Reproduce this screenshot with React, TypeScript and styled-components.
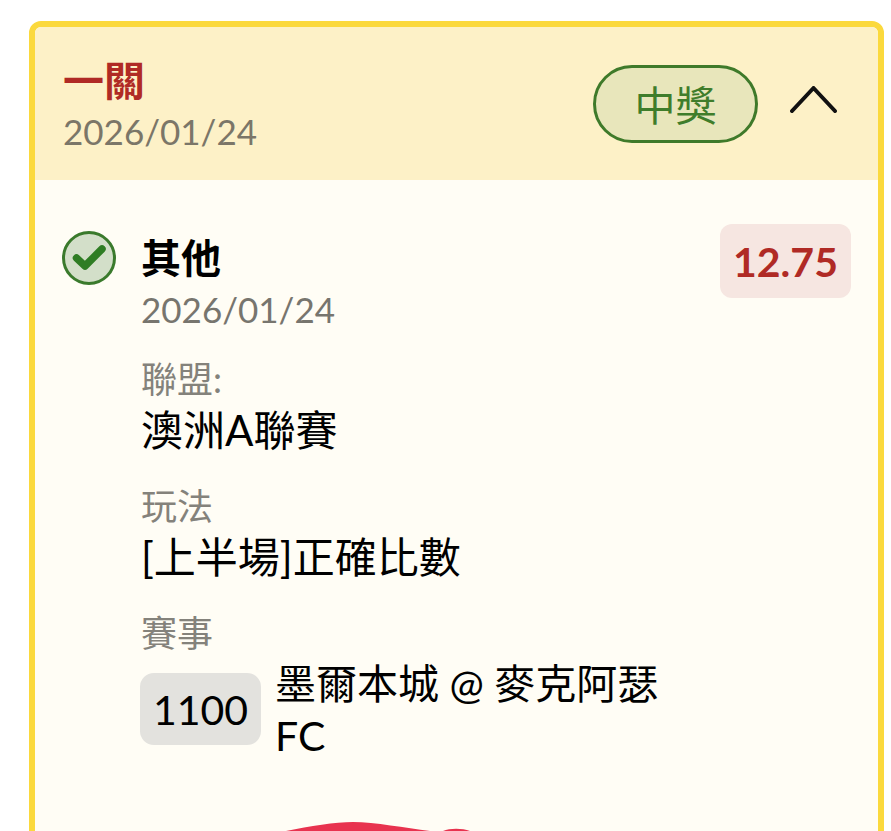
import styled, { createGlobalStyle } from "styled-components";

const GlobalStyle = createGlobalStyle`
	html, body {
		margin: 0;
		padding: 0;
		background: #fff;
		height: 831px;
		overflow: hidden;
	}
	body {
		font-family: Lato, "Noto Sans CJK TC", sans-serif;
	}
`;

const Page = styled.div`
	padding: 21px 7px 0 29px;
	height: 831px;
	box-sizing: border-box;
	overflow: hidden;
`;

const Card = styled.div`
	border: 6px solid #fbd93d;
	border-radius: 12px;
	background: #fffdf5;
	overflow: hidden;
`;

const Header = styled.div`
	display: flex;
	justify-content: space-between;
	align-items: center;
	height: 153px;
	padding: 0 41px 0 28px;
	background: #fdf1c7;
`;

const TitleBlock = styled.div`
	padding-top: 3px;
`;

const HeaderTitle = styled.div`
	font-size: 41px;
	line-height: 52px;
	font-weight: 700;
	color: #b02a25;
`;

const DateText = styled.div`
	font-size: 35px;
	line-height: 48px;
	color: #7b7668;
`;

const HeaderRight = styled.div`
	display: flex;
	align-items: center;
	gap: 32px;
`;

const Chevron = styled.svg`
	display: block;
	width: 47px;
	height: 27px;
	margin-bottom: 8px;
`;

const StatusPill = styled.div`
	display: flex;
	align-items: center;
	justify-content: center;
	width: 165px;
	height: 78px;
	padding-bottom: 2px;
	box-sizing: border-box;
	border: 3px solid #3f7a2a;
	border-radius: 39px;
	background: #e8e6bb;
	color: #3f7d2b;
	font-size: 41px;
`;

const Body = styled.div`
	padding: 44px 27px 0 28px;
`;

const BetRow = styled.div`
	display: flex;
	align-items: flex-start;
`;

const CheckIcon = styled.svg`
	width: 54px;
	height: 54px;
	margin: 7px 25px 0 -1px;
	flex: none;
`;

const BetInfo = styled.div`
	flex: 1;
	padding-top: 7px;
`;

const BetName = styled.div`
	font-size: 40px;
	line-height: 55px;
	font-weight: 700;
	color: #000;
`;

const BetDate = styled.div`
	font-size: 35px;
	line-height: 46px;
	color: #77756e;
`;

const OddsBadge = styled.div`
	flex: none;
	width: 131px;
	height: 74px;
	display: flex;
	align-items: center;
	justify-content: center;
	border-radius: 12px;
	background: #f6e6e1;
	color: #b02a25;
	font-size: 41px;
	font-weight: 700;
`;

const FieldList = styled.div`
	display: flex;
	flex-direction: column;
	gap: 25px;
	margin: 22px 0 0 78px;
`;

const FieldLabel = styled.div`
	font-size: 36px;
	line-height: 50px;
	color: #84827b;
`;

const FieldValue = styled.div`
	font-size: 42px;
	line-height: 52px;
	color: #000;
`;

const MatchRow = styled.div`
	display: flex;
	align-items: flex-start;
	gap: 14px;
	margin-left: -1px;
`;

const MatchCode = styled.div`
	flex: none;
	width: 121px;
	height: 72px;
	margin-top: 15px;
	display: flex;
	align-items: center;
	justify-content: center;
	border-radius: 14px;
	background: #e3e2de;
	color: #000;
	font-size: 41px;
`;

const MatchName = styled.div`
	width: 400px;
	font-size: 41px;
	line-height: 52px;
	color: #000;
`;

const Emblem = styled.svg`
	display: block;
	width: 200px;
	height: 30px;
	margin: 60px 0 0 217px;
`;

export default function App() {
	return (
		<Page>
			<GlobalStyle />
			<Card>
				<Header>
					<TitleBlock>
						<HeaderTitle>一關</HeaderTitle>
						<DateText>2026/01/24</DateText>
					</TitleBlock>
					<HeaderRight>
						<StatusPill>中獎</StatusPill>
						<Chevron viewBox="0 0 47 27" fill="none">
							<path d="M2 25L23.5 2L45 25" stroke="#111" strokeWidth="4" strokeLinecap="round" strokeLinejoin="round" />
						</Chevron>
					</HeaderRight>
				</Header>
				<Body>
					<BetRow>
						<CheckIcon viewBox="0 0 54 54" fill="none">
							<circle cx="27" cy="27" r="25.5" fill="#d3dfc9" stroke="#3a7a2c" strokeWidth="3" />
							<path d="M14.5 27L23 35L40 18" stroke="#2f7d24" strokeWidth="7.5" strokeLinecap="round" strokeLinejoin="round" />
						</CheckIcon>
						<BetInfo>
							<BetName>其他</BetName>
							<BetDate>2026/01/24</BetDate>
						</BetInfo>
						<OddsBadge>12.75</OddsBadge>
					</BetRow>
					<FieldList>
						<div>
							<FieldLabel>聯盟:</FieldLabel>
							<FieldValue>澳洲A聯賽</FieldValue>
						</div>
						<div>
							<FieldLabel>玩法</FieldLabel>
							<FieldValue>[上半場]正確比數</FieldValue>
						</div>
						<div>
							<FieldLabel>賽事</FieldLabel>
							<MatchRow>
								<MatchCode>1100</MatchCode>
								<MatchName>墨爾本城 @ 麥克阿瑟 FC</MatchName>
							</MatchRow>
						</div>
					</FieldList>
					<Emblem viewBox="0 0 200 30">
						<path d="M6 9C30 4 55 0 73 0C95 0 125 6 150 9L163 9C170 6 182 6 190 9V30H6Z" fill="#e8334f" />
					</Emblem>
				</Body>
			</Card>
		</Page>
	);
}
